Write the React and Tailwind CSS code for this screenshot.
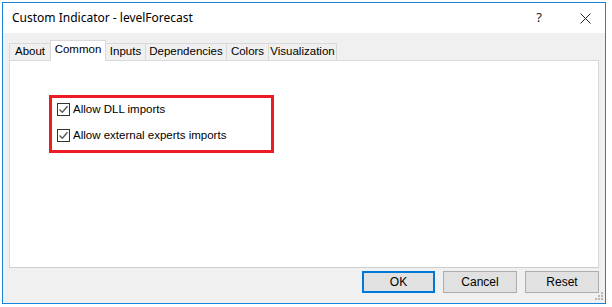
const tabs = [
  { label: 'About', w: 'w-[42px]' },
  { label: 'Common', w: 'w-[56px]', active: true },
  { label: 'Inputs', w: 'w-[41px]' },
  { label: 'Dependencies', w: 'w-[82px]' },
  { label: 'Colors', w: 'w-[43px]' },
  { label: 'Visualization', w: 'w-[69px]' },
]

function CheckBox() {
  return (
    <span className="w-[13px] h-[13px] shrink-0 border border-[#333333] bg-white flex items-center justify-center">
      <svg width="11" height="11" viewBox="0 0 11 11" fill="none" stroke="#555555" strokeWidth="1.3">
        <path d="M1.5 5.5l2.8 2.8 5.2-6" />
      </svg>
    </span>
  )
}

function Grip() {
  const dots = [[6, 0], [3, 3], [6, 3], [0, 6], [3, 6], [6, 6]]
  return (
    <svg width="8" height="8" viewBox="0 0 8 8" className="absolute right-[2px] bottom-[3px]">
      {dots.map(([x, y]) => (
        <rect key={`${x}-${y}`} x={x} y={y} width="2" height="2" fill="#b8b8b8" />
      ))}
    </svg>
  )
}

export default function App() {
  return (
    <div className="w-[612px] h-[307px] bg-white pl-[2px] pt-[2px] font-['Liberation_Sans',Arial,sans-serif]">
      <div className="relative w-[604px] h-[302px] border border-[#1883d7] bg-[#f0f0f0] flex flex-col">
        {/* Title bar */}
        <div className="h-[30px] bg-white flex items-center shrink-0">
          <span className="pl-[9px] text-[12px] text-black font-['Noto_Sans',sans-serif]">
            Custom Indicator - levelForecast
          </span>
          <span className="ml-auto mr-[38px] text-[13px] text-[#222] font-['Noto_Sans',sans-serif]">?</span>
          <svg width="11" height="11" viewBox="0 0 11 11" className="mr-[14px]" stroke="#222" strokeWidth="1">
            <path d="M0.5 0.5l10 10M10.5 0.5l-10 10" />
          </svg>
        </div>

        {/* Body */}
        <div className="flex-1 flex flex-col pt-[7px] pl-[6px] pr-[4px]">
          <div className="flex items-end h-[21px] pl-[1px] relative z-10 -mb-px">
            {tabs.map((t) =>
              t.active ? (
                <div
                  key={t.label}
                  className={`${t.w} h-[21px] -ml-px bg-white border-t border-l border-r border-[#d9d9d9] flex items-center justify-center text-[11.5px] text-black pb-[2px]`}
                >
                  {t.label}
                </div>
              ) : (
                <div
                  key={t.label}
                  className={`${t.w} h-[18px] -ml-px bg-[#f0f0f0] border-t border-l border-r border-b border-[#d9d9d9] flex items-center justify-center text-[11.5px] text-black`}
                >
                  {t.label}
                </div>
              )
            )}
          </div>
          <div className="w-[590px] h-[208px] bg-white border border-[#d9d9d9] border-b-[#cdcdcd] pt-[34px] pl-[39px]">
            <div className="w-[225px] h-[58px] border-[3px] border-[#ed1c24] pt-[5px] pl-[5px] flex flex-col gap-[13px]">
              <label className="flex items-center gap-[3px] h-[13px] leading-[13px] text-[11.5px] text-black">
                <CheckBox />
                Allow DLL imports
              </label>
              <label className="flex items-center gap-[3px] h-[13px] leading-[13px] text-[11.5px] text-black">
                <CheckBox />
                Allow external experts imports
              </label>
            </div>
          </div>

          {/* Buttons */}
          <div className="flex justify-end gap-[8px] mt-[3px] pr-[2px]">
            <button className="w-[73px] h-[22px] bg-[#e1e1e1] border-2 border-[#0078d7] text-[12px] text-black">OK</button>
            <button className="w-[74px] h-[22px] bg-[#e1e1e1] border border-[#adadad] text-[12px] text-black">Cancel</button>
            <button className="w-[74px] h-[22px] bg-[#e1e1e1] border border-[#adadad] text-[12px] text-black">Reset</button>
          </div>
        </div>
        <Grip />
      </div>
    </div>
  )
}
